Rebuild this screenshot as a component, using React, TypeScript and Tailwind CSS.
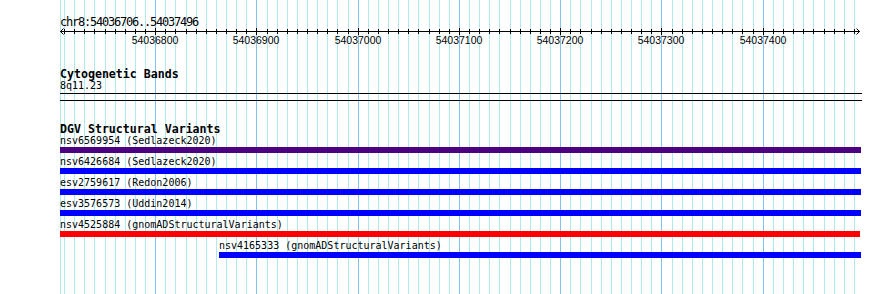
import React from "react";

const START = 54036706;
const END = 54037496;
const SCALE = 1.0126;
const LEFT = 60;

// absolute x for a base position
const px = (bp: number) => LEFT + (bp - START) * SCALE;

interface Feature {
  name: string;
  source: string;
  color: string;
  start: number;
  end: number;
}

const features: Feature[] = [
  { name: "nsv6569954", source: "Sedlazeck2020", color: "bg-[#4b0082]", start: START, end: END },
  { name: "nsv6426684", source: "Sedlazeck2020", color: "bg-[#0000ff]", start: START, end: END },
  { name: "esv2759617", source: "Redon2006", color: "bg-[#0000ff]", start: START, end: END },
  { name: "esv3576573", source: "Uddin2014", color: "bg-[#0000ff]", start: START, end: END },
  { name: "nsv4525884", source: "gnomADStructuralVariants", color: "bg-[#ff0000]", start: START, end: END - 1 },
  { name: "nsv4165333", source: "gnomADStructuralVariants", color: "bg-[#0000ff]", start: 54036863, end: END },
];

const minorStops: number[] = [];
for (let p = 54036710; p <= 54037490; p += 10) minorStops.push(p);
const majorStops = minorStops.filter((p) => p % 100 === 0);

function GridLines() {
  return (
    <svg
      className="absolute inset-0 pointer-events-none"
      width={890}
      height={294}
      shapeRendering="crispEdges"
    >
      <line x1={LEFT + 0.5} y1={0} x2={LEFT + 0.5} y2={294} stroke="#aee9f0" />
      {minorStops.map((p) => {
        const x = Math.round(px(p)) + 0.5;
        const major = p % 100 === 0;
        return (
          <line key={p} x1={x} y1={0} x2={x} y2={294} stroke={major ? "#84c2ee" : "#aee9f0"} />
        );
      })}
    </svg>
  );
}

function Ruler() {
  const w = 802;
  return (
    <svg className="block" width={w} height={18} shapeRendering="crispEdges">
      <line x1={0} y1={3.5} x2={800} y2={3.5} stroke="#000" />
      <polyline points="3.5,0.5 0.5,3.5 3.5,6.5" fill="none" stroke="#000" shapeRendering="auto" />
      <polyline points="796.5,0.5 799.5,3.5 796.5,6.5" fill="none" stroke="#000" shapeRendering="auto" />
      {minorStops.map((p) => {
        const x = Math.round(px(p)) - LEFT + 0.5;
        const major = p % 100 === 0;
        return <line key={p} x1={x} y1={major ? 0 : 1} x2={x} y2={major ? 7 : 6} stroke="#000" />;
      })}
      {majorStops.map((p) => (
        <text
          key={p}
          x={Math.round(px(p)) - LEFT}
          y={16}
          textAnchor="middle"
          fontSize={10.5}
          fontFamily="'Liberation Sans', Arial, sans-serif"
          fill="#000"
        >
          {p}
        </text>
      ))}
    </svg>
  );
}

export default function App() {
  return (
    <div className="relative w-[890px] h-[294px] overflow-hidden bg-white text-black">
      <GridLines />

      <div className="relative flex flex-col w-[862px] pl-[60px] pt-[16px] font-['DejaVu_Sans_Mono',monospace]">
        {/* Base position ruler */}
        <div className="h-[12px] text-[12px] leading-[12px] tracking-[-1.22px] whitespace-nowrap">
          chr8:54036706..54037496
        </div>
        <Ruler />

        {/* Cytogenetic Bands */}
        <div className="mt-[22px] h-[12px] text-[11.6px] leading-[12px] font-bold whitespace-nowrap">
          Cytogenetic Bands
        </div>
        <div className="mt-[1px] h-[10px] text-[10px] leading-[10px]">8q11.23</div>
        <div className="mt-[2px] h-px bg-black" />
        <div className="mt-[6px] h-px bg-black" />

        {/* DGV Structural Variants */}
        <div className="mt-[22px] h-[12px] text-[11.6px] leading-[12px] font-bold whitespace-nowrap">
          DGV Structural Variants
        </div>
        <div className="mt-[1px] flex flex-col">
          {features.map((f) => {
            const x = px(f.start) - LEFT;
            const w = px(f.end + 1) - px(f.start);
            return (
              <div key={f.name} className="h-[21px] flex flex-col">
                <div
                  className="h-[10px] text-[10px] leading-[10px] whitespace-nowrap"
                  style={{ marginLeft: x }}
                >
                  {f.name} ({f.source})
                </div>
                <div className={`mt-[1px] h-[6px] ${f.color}`} style={{ marginLeft: x, width: w }} />
              </div>
            );
          })}
        </div>
      </div>
    </div>
  );
}
